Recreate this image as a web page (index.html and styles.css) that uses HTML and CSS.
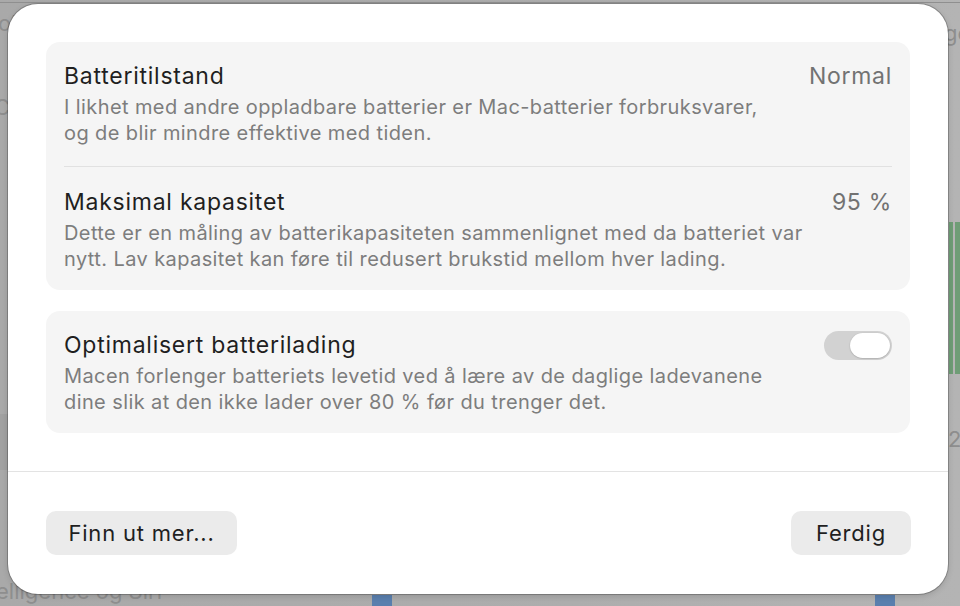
FILE: index.html
```html
<!DOCTYPE html>
<html lang="no">
<head>
<meta charset="utf-8">
<title>Batteritilstand</title>
<link rel="stylesheet" href="styles.css">
</head>
<body>
<div class="backdrop">
  <span class="bg-text bg-tl">ol</span>
  <span class="bg-text bg-c">C</span>
  <span class="bg-text bg-tr">ge</span>
  <span class="bg-text bg-2">2</span>
  <span class="bg-text bg-bl">elligence og Siri</span>
  <div class="bg-row"></div>
  <div class="bg-green g1"></div>
  <div class="bg-green g2"></div>
  <div class="bg-blue b1"></div>
  <div class="bg-blue b2"></div>
</div>

<div class="sheet">
  <div class="content">
    <section class="card">
      <div class="item">
        <div class="item-text">
          <div class="title">Batteritilstand</div>
          <div class="desc">I likhet med andre oppladbare batterier er Mac-batterier forbruksvarer,<br>og de blir mindre effektive med tiden.</div>
        </div>
        <div class="value">Normal</div>
      </div>
      <div class="item item-second">
        <div class="item-text">
          <div class="title">Maksimal kapasitet</div>
          <div class="desc">Dette er en måling av batterikapasiteten sammenlignet med da batteriet var<br>nytt. Lav kapasitet kan føre til redusert brukstid mellom hver lading.</div>
        </div>
        <div class="value">95 %</div>
      </div>
    </section>
    <section class="card">
      <div class="item">
        <div class="item-text">
          <div class="title">Optimalisert batterilading</div>
          <div class="desc">Macen forlenger batteriets levetid ved å lære av de daglige ladevanene<br>dine slik at den ikke lader over 80 % før du trenger det.</div>
        </div>
        <div class="toggle"><div class="knob"></div></div>
      </div>
    </section>
  </div>
  <div class="footer">
    <button class="btn btn-more">Finn ut mer...</button>
    <button class="btn btn-done">Ferdig</button>
  </div>
</div>
</body>
</html>
```

FILE: styles.css
```css
* { box-sizing: border-box; }

html, body {
  margin: 0;
  padding: 0;
}

body {
  width: 960px;
  height: 606px;
  overflow: hidden;
  position: relative;
  background: linear-gradient(90deg, #a9a9a9 0%, #adadad 60%, #b4b4b4 100%);
  font-family: Inter, "Noto Sans", "Liberation Sans", sans-serif;
  padding: 4px 0 0 8px;
}

/* ---------- blurred window behind the sheet ---------- */
.backdrop {
  position: absolute;
  inset: 0;
  z-index: 0;
}
.backdrop::before {
  content: "";
  position: absolute;
  left: 0; right: 0; top: 2px;
  height: 1px;
  background: #8f8f8f;
}
.bg-text {
  position: absolute;
  color: #8e8e8e;
  font-size: 22px;
  line-height: 1;
}
.bg-tl { left: -2px; top: 12px; }
.bg-c { left: -6px; top: 96px; }
.bg-tr { left: 944px; top: 22px; }
.bg-2 { left: 948px; top: 428px; }
.bg-bl { left: -4px; top: 580px; }
.bg-row {
  position: absolute;
  left: 0; top: 414px;
  width: 10px; height: 56px;
  background: #a1a1a1;
}
.bg-green {
  position: absolute;
  top: 222px;
  height: 152px;
  width: 4px;
  background: #6f9d76;
}
.g1 { left: 949px; }
.g2 { left: 955px; width: 5px; }
.bg-blue {
  position: absolute;
  top: 595px;
  height: 11px;
  width: 20px;
  background: #5a7fae;
}
.b1 { left: 372px; }
.b2 { left: 875px; }

/* ---------- sheet ---------- */
.sheet {
  position: relative;
  z-index: 1;
  width: 940px;
  height: 590px;
  background: #ffffff;
  border-radius: 30px;
  box-shadow: 0 0 0 1px rgba(0, 0, 0, 0.22), 0 2px 6px rgba(0, 0, 0, 0.15);
  display: flex;
  flex-direction: column;
}

.content {
  height: 468px;
  padding: 38px 38px 0 38px;
  display: flex;
  flex-direction: column;
  gap: 21px;
  border-bottom: 1px solid #e3e3e3;
}

.card {
  background: #f5f5f5;
  border-radius: 14px;
  padding: 0 18px 0 18px;
}

.item {
  display: flex;
  justify-content: space-between;
  align-items: flex-start;
  padding: 20px 0 18px;
}
.item-second {
  border-top: 1px solid #e1e1e1;
  padding-top: 21px;
}
.card:first-child .item:first-child { padding-bottom: 20px; }

.title {
  font-size: 23px;
  line-height: 28px;
  color: #1f1f1f;
  letter-spacing: 0.75px;
}
.desc {
  margin-top: 4px;
  font-size: 20px;
  line-height: 26px;
  color: #7d7d7d;
  letter-spacing: 0.4px;
}
.value {
  font-size: 23px;
  line-height: 28px;
  color: #727272;
  letter-spacing: 0.7px;
}

.toggle {
  width: 68px;
  height: 29px;
  border-radius: 15px;
  background: #d2d2d2;
  padding: 2px 2px 2px 0;
  display: flex;
  justify-content: flex-end;
}
.knob {
  width: 40px;
  height: 25px;
  border-radius: 13px;
  background: #ffffff;
  box-shadow: 0 0.5px 1.5px rgba(0, 0, 0, 0.25);
}

/* ---------- footer ---------- */
.footer {
  display: flex;
  justify-content: space-between;
  padding: 39px 37px 0 38px;
}
.btn {
  height: 44px;
  border: none;
  border-radius: 10px;
  background: #ebebeb;
  font-family: inherit;
  font-size: 22px;
  letter-spacing: 0.8px;
  color: #1f1f1f;
  padding: 0;
}
.btn-more { width: 191px; }
.btn-done { width: 120px; }
```
